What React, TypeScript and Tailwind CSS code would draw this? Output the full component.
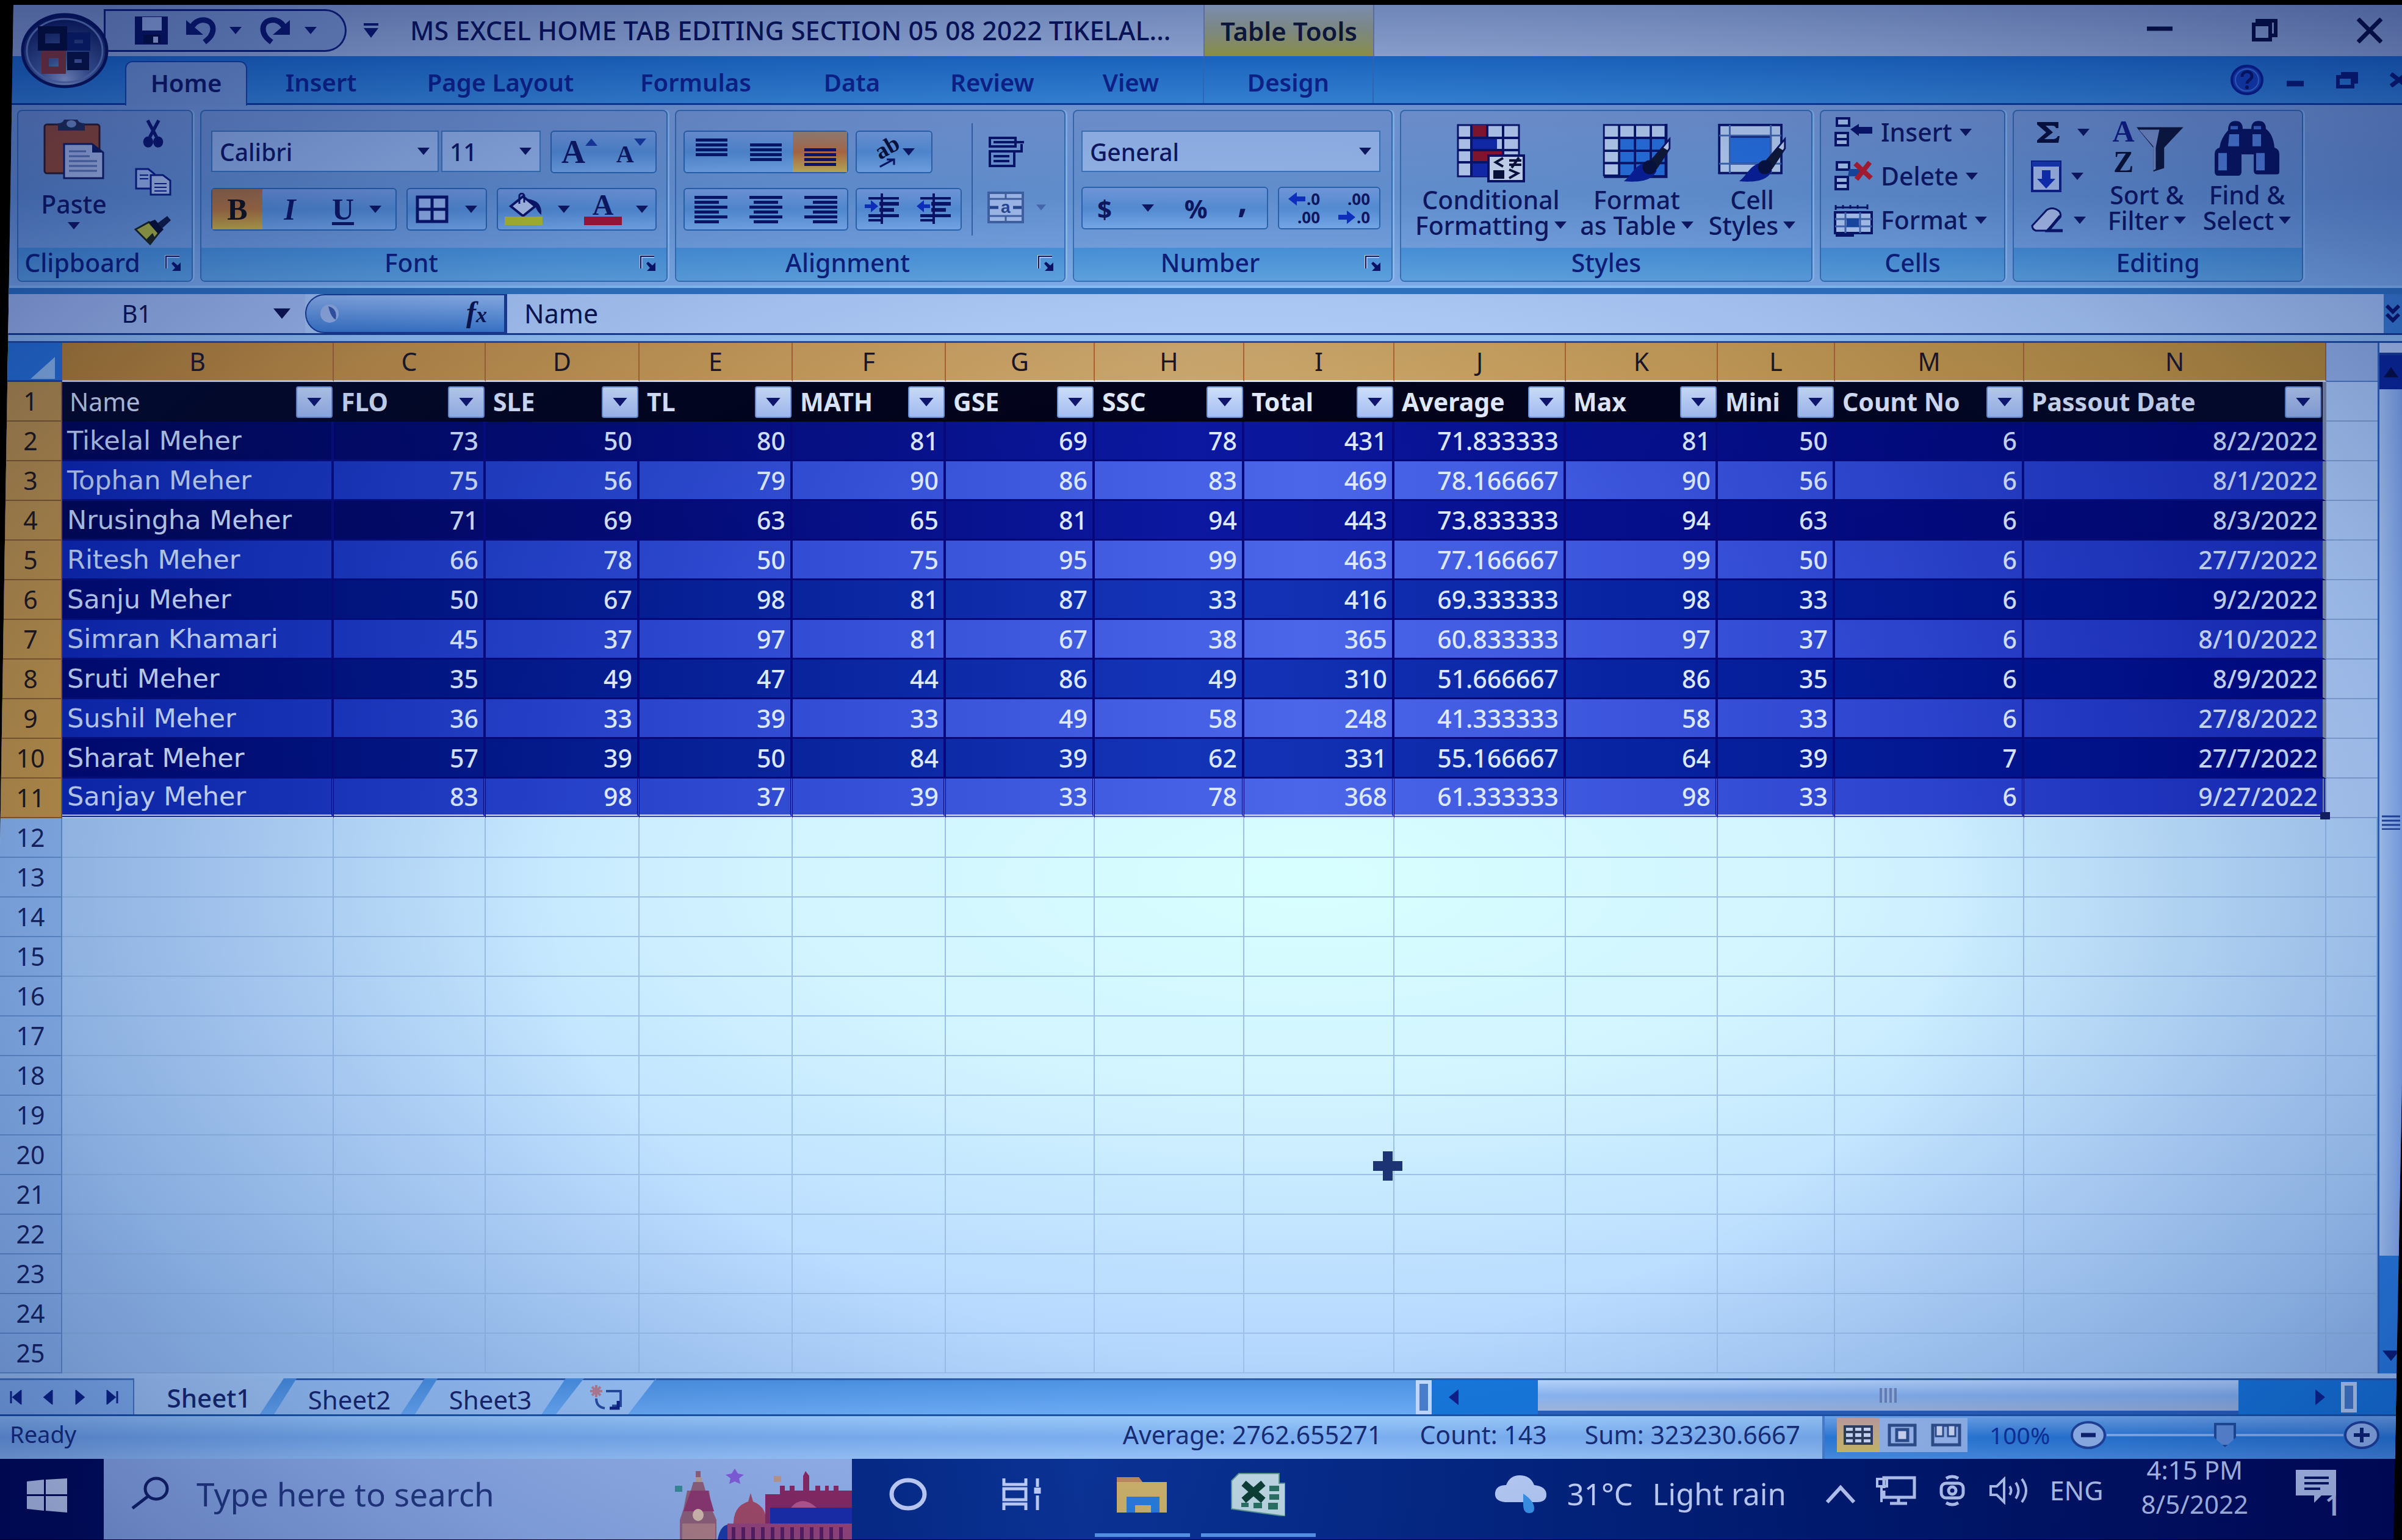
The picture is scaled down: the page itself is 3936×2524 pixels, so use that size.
import React, { ReactNode } from "react";

const NAVY = "#0a1064";

function Caret({ className = "w-[22px] h-3" }: { className?: string }) {
  return (
    <svg viewBox="0 0 20 12" className={className + " shrink-0"} fill="currentColor" aria-hidden="true">
      <path d="M0 0h20L10 12z" />
    </svg>
  );
}

function Launcher({ label }: { label: string }) {
  return (
    <button aria-label={label + " options"} className="absolute right-4 top-3 h-7 w-7">
      <svg viewBox="0 0 28 28" className="h-7 w-7" aria-hidden="true">
        <path d="M2 22V2h22" fill="none" stroke="#dfe8ff" strokeWidth="5" />
        <path d="M2 22V2h22" fill="none" stroke={NAVY} strokeWidth="2" />
        <path d="M26 12v14H12l5-5-6-7 3-3 7 6z" fill={NAVY} />
      </svg>
    </button>
  );
}

function Group({ label, className, launcher, children }: { label: string; className: string; launcher?: boolean; children: ReactNode }) {
  return (
    <section
      aria-label={label}
      className={
        "flex h-[282px] shrink-0 flex-col overflow-hidden rounded-lg border-2 border-[#3c78bc] bg-linear-to-b from-[#85a6df] via-[#709fdc] to-[#88b4f0] shadow-[3px_0_0_#9ccaf8] " +
        className
      }
    >
      <div className="min-h-0 flex-1">{children}</div>
      <div
        className={
          "relative flex h-[54px] items-center justify-center bg-linear-to-b from-[#4f9ce2] to-[#66ade8] text-[#101c78] " +
          (launcher ? "pr-[74px]" : "")
        }
      >
        <span className="pb-1">{label}</span>
        {launcher && <Launcher label={label} />}
      </div>
    </section>
  );
}

const BOX = "flex h-[70px] items-center rounded-md border-2 border-[#2f6cb4] bg-linear-to-b from-[#82aaea] via-[#5f9ae0] to-[#84b8f6]";

function IconBtn({ label, className = "", children }: { label: string; className?: string; children: ReactNode }) {
  return (
    <button aria-label={label} className={"flex h-full items-center justify-center " + className}>
      {children}
    </button>
  );
}

function Combo({ label, value, className }: { label: string; value: string; className: string }) {
  return (
    <div className={"relative h-[68px] border-2 border-[#4580c4] bg-[#aac8f8] " + className}>
      <select aria-label={label} defaultValue={value} className="h-full w-full appearance-none bg-transparent pl-3 text-[39px] leading-none">
        <option>{value}</option>
      </select>
      <Caret className="pointer-events-none absolute right-3 top-[26px] h-3 w-[22px]" />
    </div>
  );
}

function Lines({ rows, y = 0 }: { rows: [number, number][]; y?: number }) {
  return (
    <svg viewBox="0 0 56 48" className="h-12 w-14" aria-hidden="true">
      {rows.map(([x, w], i) => (
        <rect key={i} x={x} y={y + i * 8} width={w} height="5" fill={NAVY} />
      ))}
    </svg>
  );
}

function IndentIcon({ flip }: { flip?: boolean }) {
  return (
    <svg viewBox="0 0 60 52" className="h-[52px] w-[60px]" aria-hidden="true">
      <g fill={NAVY}>
        <rect x="6" y="6" width="50" height="4" />
        <rect x="24" y="14" width="32" height="6" />
        <rect x="24" y="24" width="24" height="6" />
        <rect x="6" y="34" width="50" height="5" />
        <rect x="6" y="42" width="22" height="4" />
        <rect x="26" y="0" width="4" height="50" />
      </g>
      {flip ? <path d="M22 21L10 11v7H0v6h10v7z" fill="#1030c8" /> : <path d="M0 21l12-10v7h10v6H12v7z" fill="#1030c8" />}
    </svg>
  );
}

function Brush() {
  return (
    <>
      <path d="M116 28L84 66l12 8 20-30z" fill="#dce8ff" stroke={NAVY} strokeWidth="3" />
      <path d="M104 42L80 68l14 12 20-32z" fill="#101428" />
      <path d="M80 68c-24 2-26 20-42 32 26 2 48 0 56-18z" fill="#0a1c98" />
      <circle cx="82" cy="76" r="12" fill="#080c30" />
    </>
  );
}

function CondIcon() {
  return (
    <svg viewBox="0 0 116 98" className="h-[98px] w-[116px]" aria-hidden="true">
      <rect x="4" y="4" width="100" height="84" fill="#cfe0ff" stroke={NAVY} strokeWidth="3" />
      <path d="M26 4h26v20H26zM26 46h50v18H26z" fill="#9a1020" />
      <path d="M26 26h42v18H26zM26 66h26v22H26z" fill="#1428b0" />
      <path d="M4 25h100M4 45h100M4 65h100M26 4v84M52 4v20M78 4v84" stroke={NAVY} strokeWidth="4" />
      <rect x="54" y="54" width="58" height="42" fill="#e4eeff" stroke={NAVY} strokeWidth="4" />
      <path d="M78 58L66 65l12 7M88 62h20M88 69h20M104 57L92 74M88 77l14 6-14 8" fill="none" stroke="#080c30" strokeWidth="4" />
      <rect x="62" y="78" width="18" height="14" fill="#080c30" />
    </svg>
  );
}

function FormatTableIcon() {
  return (
    <svg viewBox="0 0 120 102" className="h-[98px] w-[116px]" aria-hidden="true">
      <rect x="4" y="4" width="106" height="86" fill="#cfe4ff" stroke={NAVY} strokeWidth="3" />
      <path d="M30 26h80v64H30z" fill="#2c78e8" />
      <path d="M4 26h106M4 48h106M4 69h106M30 4v86M57 4v86M84 4v86" stroke={NAVY} strokeWidth="4" />
      <path d="M110 2v90H4" fill="none" stroke={NAVY} strokeWidth="5" />
      <Brush />
    </svg>
  );
}

function CellStylesIcon() {
  return (
    <svg viewBox="0 0 120 102" className="h-[98px] w-[116px]" aria-hidden="true">
      <rect x="4" y="4" width="106" height="82" fill="#cfe4ff" stroke={NAVY} strokeWidth="4" />
      <rect x="22" y="24" width="70" height="46" fill="#2c78e8" stroke={NAVY} strokeWidth="3" />
      <path d="M4 22h106M4 70h106M22 4v82M92 4v82" stroke="#4a70b8" strokeWidth="3" />
      <Brush />
    </svg>
  );
}

function CellsIcon({ kind }: { kind: "insert" | "delete" | "format" }) {
  if (kind === "format")
    return (
      <svg viewBox="0 0 66 54" className="h-[54px] w-[66px]" aria-hidden="true">
        <path d="M4 2v8M4 6h52M16 2v6M28 2v6M40 2v6M56 1v8" stroke={NAVY} strokeWidth="3" />
        <rect x="3" y="14" width="60" height="34" fill="#c4dcff" stroke={NAVY} strokeWidth="4" />
        <path d="M3 25h60M3 37h60M20 14v34M44 14v34" stroke="#4a70b8" strokeWidth="3" />
        <rect x="22" y="24" width="20" height="14" fill="#1c4ca8" />
        <path d="M4 52h28v-6" fill="none" stroke={NAVY} strokeWidth="4" />
      </svg>
    );
  return (
    <svg viewBox="0 0 66 50" className="h-[50px] w-[66px]" aria-hidden="true">
      <g fill="#c4dcff" stroke={NAVY} strokeWidth="4">
        <rect x="6" y="2" width="20" height="12" />
        <rect x="4" y="26" width="20" height="10" />
        <rect x="4" y="36" width="20" height="10" />
      </g>
      {kind === "insert" ? (
        <path d="M28 20l14-9v5h22v11H42v4z" fill={NAVY} />
      ) : (
        <>
          <path d="M26 13h18v12H24z" fill="#1c4ca8" />
          <path d="M36 4l26 24M60 2L38 30" stroke="#d01820" strokeWidth="8" />
        </>
      )}
    </svg>
  );
}

function SortIcon() {
  return (
    <span className="flex h-[104px] w-[120px]">
      <span className="flex w-11 flex-col font-[Liberation_Serif] text-[50px] leading-[50px] font-bold">
        <span className="h-[50px] text-[#141c84]">A</span>
        <span className="h-[50px] text-[#080c24]">Z</span>
      </span>
      <svg viewBox="38 0 78 96" className="h-24 w-[78px]" aria-hidden="true">
        <path d="M38 18h78L84 52v34l-18 6V52z" fill="#10142c" />
        <path d="M42 22h34L70 52v36l-4 2V50z" fill="#8fa6d8" />
      </svg>
    </span>
  );
}

function BinocularsIcon() {
  return (
    <svg viewBox="0 0 110 84" className="h-[92px] w-[110px]" preserveAspectRatio="none" aria-hidden="true">
      <path d="M24 16q0-14 12-14t12 12h14q0-12 12-12t12 12q12 8 14 28 8 2 8 10v26q0 4-4 4H72q-6 0-6-6V52H46v26q0 6-6 6H8q-6 0-6-6V52q0-8 8-10 2-14 14-26z" fill="#0a1158" />
      <path d="M26 22h16v18H24zM64 22h14v18H64zM8 50h14v26H8zM70 50h14v26H70z" fill="#5f8fe8" />
      <path d="M28 12h12M66 12h12" stroke="#4c78d8" strokeWidth="5" />
    </svg>
  );
}

function BigBtn({ icon, lines, className }: { icon: ReactNode; lines: [string, string]; className: string }) {
  return (
    <button className={"flex flex-col items-center " + className}>
      <span className="flex h-[104px] items-center justify-center">{icon}</span>
      <span className="mt-1 leading-[42px]">{lines[0]}</span>
      <span className="flex items-center gap-2 whitespace-nowrap leading-[42px]">
        {lines[1]}
        <Caret className="h-3 w-5" />
      </span>
    </button>
  );
}

function TitleBar() {
  return (
    <header className="relative flex h-[84px] items-center bg-linear-to-b from-[#9ab0da] to-[#b2c6ea]">
      <button aria-label="Office Button" className="absolute left-[34px] top-[13px] z-10 h-[124px] w-[144px]">
        <svg viewBox="0 0 144 124" className="h-full w-full" aria-hidden="true">
          <defs>
            <radialGradient id="orb" cx="50%" cy="90%" r="85%">
              <stop offset="0" stopColor="#c4d4f8" />
              <stop offset="0.35" stopColor="#5c74ac" />
              <stop offset="1" stopColor="#10164c" />
            </radialGradient>
          </defs>
          <ellipse cx="72" cy="62" rx="69" ry="59" fill="url(#orb)" stroke="#0a1050" strokeWidth="5" />
          <ellipse cx="72" cy="62" rx="62" ry="52" fill="none" stroke="#7c94cc" strokeWidth="3" />
          <g fill="none" strokeWidth="12">
            <rect x="34" y="28" width="36" height="28" stroke="#06081f" />
            <rect x="82" y="38" width="26" height="18" stroke="#101c60" />
            <rect x="40" y="68" width="28" height="26" stroke="#a83c24" />
            <rect x="82" y="70" width="24" height="18" stroke="#0a0e2c" />
          </g>
        </svg>
      </button>
      <div className="ml-[170px] flex h-[70px] w-[398px] items-center rounded-bl-[24px] rounded-r-full border-[3px] border-[#101c74] bg-[#94aede] pl-[46px] text-[#0c1468]">
        <button aria-label="Save">
          <svg viewBox="0 0 58 50" className="h-[50px] w-[58px]" aria-hidden="true">
            <path d="M2 2h54v46H2z" fill="#0a1058" />
            <path d="M14 3h32v22H14z" fill="#b8ccf8" />
            <path d="M16 32h28v14H16z" fill="#04082c" />
            <path d="M32 35h8v10h-8z" fill="#c8d8ff" />
          </svg>
        </button>
        <button aria-label="Undo" className="ml-7">
          <svg viewBox="0 0 50 46" className="h-[46px] w-[50px]" fill="none" aria-hidden="true">
            <path d="M10 16C20 0 44 4 44 20c0 10-6 16-14 22" stroke="#0c1468" strokeWidth="9" />
            <path d="M0 6v24h28z" fill="#0c1468" />
          </svg>
        </button>
        <button aria-label="Undo list" className="ml-5"><Caret /></button>
        <button aria-label="Redo" className="ml-7">
          <svg viewBox="0 0 50 46" className="h-[46px] w-[50px]" fill="none" aria-hidden="true">
            <path d="M40 16C30 0 6 4 6 20c0 10 6 16 14 22" stroke="#0c1468" strokeWidth="9" />
            <path d="M50 6v24H22z" fill="#0c1468" />
          </svg>
        </button>
        <button aria-label="Redo list" className="ml-6"><Caret className="h-3 w-5" /></button>
      </div>
      <button aria-label="Customize Quick Access Toolbar" className="ml-7 text-[#0c1468]">
        <svg viewBox="0 0 24 24" className="h-6 w-6" fill="currentColor" aria-hidden="true">
          <path d="M0 0h24v4H0zM0 8h24L12 24z" />
        </svg>
      </button>
      <h1 className="ml-[52px] w-[1300px] shrink-0 whitespace-nowrap text-[43px] font-medium text-[#0a0f50]">
        MS EXCEL HOME TAB EDITING SECTION 05 08 2022 TIKELAL...
      </h1>
      <div className="flex h-full w-[280px] items-center justify-center border-x-2 border-[#7c8cb0] bg-linear-to-b from-[#a8b8cc] via-[#a8ac88] to-[#b4b030] text-[42px] font-semibold text-[#10142c]">
        Table Tools
      </div>
      <div className="ml-auto flex items-center gap-[130px] pr-8 text-[#060a30]">
        <button aria-label="Minimize">
          <svg viewBox="0 0 42 42" className="h-[42px] w-[42px]" aria-hidden="true"><path d="M0 18h42" stroke="currentColor" strokeWidth="7" /></svg>
        </button>
        <button aria-label="Restore">
          <svg viewBox="0 0 42 40" className="h-10 w-[42px]" fill="none" stroke="currentColor" strokeWidth="6" aria-hidden="true">
            <rect x="3" y="10" width="27" height="25" />
            <path d="M9 10V4h30v24h-9" />
          </svg>
        </button>
        <button aria-label="Close">
          <svg viewBox="0 0 42 42" className="h-[42px] w-[42px]" aria-hidden="true"><path d="M2 2l38 38M40 2L2 40" stroke="currentColor" strokeWidth="7" /></svg>
        </button>
      </div>
    </header>
  );
}

function TabStrip() {
  const tabs: [string, string][] = [
    ["Insert", "w-[242px]"],
    ["Page Layout", "w-[346px]"],
    ["Formulas", "w-[294px]"],
    ["Data", "w-[218px]"],
    ["Review", "w-[242px]"],
    ["View", "w-[212px]"],
  ];
  return (
    <nav className="flex h-20 items-stretch border-b-[3px] border-[#0c3ca0] bg-linear-to-b from-[#2278d8] to-[#4096e8] pl-[205px] text-[40px] font-semibold text-[#10208c]">
      <button className="mt-2 -mb-1 w-[200px] rounded-t-xl border-x-2 border-t-2 border-[#1c48a8] bg-[#88acE4] pb-1 text-[#10145c]">Home</button>
      {tabs.map(([t, w]) => (
        <button key={t} className={"shrink-0 pt-2 " + w}>{t}</button>
      ))}
      <button className="ml-3 w-[280px] border-x-2 border-[#3c78c8] pt-2">Design</button>
      <div className="ml-auto flex items-center gap-9 text-[#0a1870]">
        <button aria-label="Help">
          <svg viewBox="0 0 56 52" className="h-[52px] w-14" aria-hidden="true">
            <ellipse cx="28" cy="26" rx="25" ry="23" fill="#1a44c4" stroke="#0c1c90" strokeWidth="4" />
            <ellipse cx="28" cy="26" rx="19" ry="18" fill="none" stroke="#4c80e8" strokeWidth="2" />
            <path d="M20 21c0-11 16-11 16-1 0 6-8 6-8 12" fill="none" stroke="#0a1260" strokeWidth="5" />
            <circle cx="28" cy="38" r="3" fill="#0a1260" />
          </svg>
        </button>
        <button aria-label="Minimize workbook"><svg viewBox="0 0 30 24" className="h-6 w-[30px]" aria-hidden="true"><path d="M1 18h28" stroke="currentColor" strokeWidth="9" /></svg></button>
        <button aria-label="Restore workbook" className="ml-4">
          <svg viewBox="0 0 36 30" className="h-[30px] w-9" fill="none" stroke="currentColor" strokeWidth="6" aria-hidden="true">
            <path d="M3 10h24v16H3zM8 5h25v16" />
          </svg>
        </button>
        <button aria-label="Close workbook" className="ml-4 w-5 overflow-hidden">
          <svg viewBox="0 0 30 24" className="h-6 w-[30px]" aria-hidden="true"><path d="M2 2l26 20M28 2L2 22" stroke="currentColor" strokeWidth="7" /></svg>
        </button>
      </div>
    </nav>
  );
}

function Ribbon() {
  const full: [number, number][] = [[2, 52], [2, 52], [2, 52], [2, 52]];
  return (
    <div className="flex gap-3 border-b-4 border-[#94ccff] bg-linear-to-b from-[#8aaee6] via-[#76a2e0] to-[#8ab8f2] pt-2 pb-[6px] pl-7 text-[41px] font-medium text-[#10145c]">
      <Group label="Clipboard" className="w-[288px]" launcher>
        <div className="flex h-full">
          <button className="flex w-[190px] flex-col items-center pt-3 pr-2">
            <svg viewBox="0 0 104 102" className="h-[102px] w-[104px]" aria-hidden="true">
              <rect x="4" y="10" width="90" height="80" rx="4" fill="#b05020" stroke="#3a1810" strokeWidth="3" />
              <path d="M26 8q8 0 10-6h22q2 6 12 6v12H26z" fill="#2a3048" />
              <ellipse cx="48" cy="9" rx="8" ry="6" fill="#8ca4d4" />
              <path d="M36 42h46l18 14v42H36z" fill="#c8d8fc" stroke="#141c5c" strokeWidth="3" />
              <path d="M82 42v14h18z" fill="#141c5c" />
              <path d="M44 54h28M44 62h34M44 70h46M44 78h46M44 86h46" stroke="#6c84b8" strokeWidth="3" />
            </svg>
            <span className="mt-4 leading-[44px]">Paste</span>
            <Caret className="mt-2 h-3 w-5" />
          </button>
          <div className="flex flex-col items-center gap-5 pt-2">
            <IconBtn label="Cut" className="h-[54px]">
              <svg viewBox="0 0 44 52" className="h-12 w-10" fill="none" stroke="#0c1468" strokeWidth="6" aria-hidden="true">
                <path d="M12 2l16 30M32 2L16 32" />
                <ellipse cx="13" cy="41" rx="6" ry="7" fill="#0c1468" />
                <ellipse cx="31" cy="41" rx="6" ry="7" fill="#0c1468" />
              </svg>
            </IconBtn>
            <IconBtn label="Copy" className="h-[50px]">
              <svg viewBox="0 0 60 46" className="h-[46px] w-[60px]" stroke="#0c1c84" strokeWidth="3" aria-hidden="true">
                <path d="M2 2h20l10 8v24H2z" fill="#b8d0ff" />
                <path d="M26 12h20l12 9v23H26z" fill="#c8dcff" />
                <path d="M32 26h20M32 32h20M32 38h20M8 12h14M8 18h14" strokeWidth="2" />
              </svg>
            </IconBtn>
            <IconBtn label="Format Painter" className="h-[54px]">
              <svg viewBox="0 0 62 50" className="h-[50px] w-[62px]" aria-hidden="true">
                <path d="M2 24L24 12l16 18-14 18z" fill="#c8cc30" stroke="#20240c" strokeWidth="3" />
                <path d="M24 12l10-4 14 16-8 8z" fill="#080c24" />
                <path d="M38 14L54 2l6 7-14 13z" fill="#141a38" />
                <path d="M20 40l10-10 4 8-8 10z" fill="#20240c" />
              </svg>
            </IconBtn>
          </div>
        </div>
      </Group>

      <Group label="Font" className="w-[766px]" launcher>
        <div className="flex flex-col gap-6 px-4 pt-8">
          <div className="flex gap-1">
            <Combo label="Font name" value="Calibri" className="w-[374px]" />
            <Combo label="Font size" value="11" className="w-[164px]" />
            <div className={BOX + " ml-3 w-[174px] justify-around"}>
              <IconBtn label="Grow Font">
                <span className="font-[Liberation_Serif] text-[54px] leading-none font-bold">A</span>
                <svg viewBox="0 0 20 12" className="mb-8 h-3 w-5" aria-hidden="true"><path d="M0 12h20L10 0z" fill="#1c3ca4" /></svg>
              </IconBtn>
              <IconBtn label="Shrink Font">
                <span className="pt-2 font-[Liberation_Serif] text-[40px] leading-none font-bold">A</span>
                <svg viewBox="0 0 20 12" className="mb-8 h-3 w-5" aria-hidden="true"><path d="M0 0h20L10 12z" fill="#1c3ca4" /></svg>
              </IconBtn>
            </div>
          </div>
          <div className="flex gap-4">
            <div className={BOX + " w-[304px] font-[Liberation_Serif] text-[50px] leading-none"}>
              <IconBtn label="Bold" className="w-[82px] bg-linear-to-b from-[#b87838] via-[#d08030] to-[#e8c838] font-bold text-[#141008]">B</IconBtn>
              <IconBtn label="Italic" className="w-[90px] font-bold italic">I</IconBtn>
              <IconBtn label="Underline" className="w-[84px] font-bold underline underline-offset-4">U</IconBtn>
              <IconBtn label="Underline style"><Caret /></IconBtn>
            </div>
            <div className={BOX + " w-[132px] justify-around"}>
              <IconBtn label="Borders">
                <svg viewBox="0 0 54 46" className="h-[46px] w-[54px]" fill="#a8c4f8" stroke={NAVY} strokeWidth="5" aria-hidden="true">
                  <path d="M3 3h48v40H3zM27 3v40M3 23h48" />
                </svg>
              </IconBtn>
              <IconBtn label="Border style"><Caret /></IconBtn>
            </div>
            <div className={BOX + " w-[262px] justify-around"}>
              <IconBtn label="Fill Color">
                <svg viewBox="0 0 64 54" className="h-[54px] w-16" aria-hidden="true">
                  <path d="M10 22L30 6l20 16-20 16z" fill="#c8d8fc" stroke={NAVY} strokeWidth="4" />
                  <path d="M36 10q26 2 24 26-6-4-10-14z" fill={NAVY} />
                  <path d="M24 18V4q4-6 8 0v12" fill="none" stroke={NAVY} strokeWidth="3" />
                  <path d="M0 39h62v14H0z" fill="#c8d020" />
                </svg>
              </IconBtn>
              <IconBtn label="Fill color list"><Caret /></IconBtn>
              <IconBtn label="Font Color">
                <span className="flex flex-col items-center">
                  <span className="h-[38px] font-[Liberation_Serif] text-[48px] leading-[38px] font-bold">A</span>
                  <span className="h-[14px] w-[62px] bg-[#b81028]" />
                </span>
              </IconBtn>
              <IconBtn label="Font color list"><Caret /></IconBtn>
            </div>
          </div>
        </div>
      </Group>

      <Group label="Alignment" className="w-[640px]" launcher>
        <div className="flex h-full">
          <div className="flex w-[484px] flex-col gap-6 py-8 pl-3">
            <div className="flex gap-3">
              <div className={BOX + " w-[270px]"}>
                <IconBtn label="Top Align" className="flex-1"><Lines rows={full} y={2} /></IconBtn>
                <IconBtn label="Middle Align" className="flex-1"><Lines rows={full} y={10} /></IconBtn>
                <IconBtn label="Bottom Align" className="flex-1 bg-linear-to-b from-[#b09070] via-[#cc7438] to-[#dcc050]"><Lines rows={full} y={18} /></IconBtn>
              </div>
              <div className={BOX + " w-[126px] justify-center"}>
                <IconBtn label="Orientation">
                  <span className="flex flex-col items-center">
                    <span className="h-9 -rotate-30 font-[Liberation_Serif] text-[38px] leading-9 font-bold text-[#080c30]">ab</span>
                    <svg viewBox="0 0 44 20" className="h-4 w-11" aria-hidden="true">
                      <path d="M8 18L34 4M22 3h15v11" fill="none" stroke={NAVY} strokeWidth="4" />
                    </svg>
                  </span>
                  <Caret className="ml-1 h-3 w-5" />
                </IconBtn>
              </div>
            </div>
            <div className="flex gap-3">
              <div className={BOX + " w-[270px]"}>
                <IconBtn label="Align Left" className="flex-1"><Lines y={2} rows={[[0, 54], [0, 40], [0, 54], [0, 40], [0, 54], [0, 40]]} /></IconBtn>
                <IconBtn label="Center" className="flex-1"><Lines y={2} rows={[[1, 54], [8, 40], [1, 54], [8, 40], [1, 54], [8, 40]]} /></IconBtn>
                <IconBtn label="Align Right" className="flex-1"><Lines y={2} rows={[[2, 54], [16, 40], [2, 54], [16, 40], [2, 54], [16, 40]]} /></IconBtn>
              </div>
              <div className={BOX + " w-[174px] justify-around"}>
                <IconBtn label="Decrease Indent"><IndentIcon flip /></IconBtn>
                <IconBtn label="Increase Indent"><IndentIcon /></IconBtn>
              </div>
            </div>
          </div>
          <div className="my-5 flex flex-col gap-10 border-l-2 border-[#3c68ac] pt-5 pl-6">
            <button aria-label="Wrap Text">
              <svg viewBox="0 0 64 52" className="h-[52px] w-16" fill="none" stroke={NAVY} strokeWidth="4" aria-hidden="true">
                <rect x="4" y="4" width="42" height="14" />
                <rect x="4" y="26" width="40" height="24" />
                <path d="M10 11h50M10 34h26M10 42h26M46 26h10V14" />
              </svg>
            </button>
            <button aria-label="Merge and Center" className="flex items-center gap-5 text-[#5070b4]">
              <svg viewBox="0 0 60 52" className="h-[52px] w-[60px]" aria-hidden="true">
                <rect x="2" y="2" width="56" height="48" fill="#b4ccf8" stroke="#4868a8" strokeWidth="4" />
                <path d="M2 12h56M2 40h56M30 2v10M30 40v10" stroke="#4868a8" strokeWidth="3" />
                <text x="22" y="35" fontFamily="Liberation Sans, sans-serif" fontWeight="700" fontSize="28" fill="#2c4c94">a</text>
                <path d="M4 26h14M56 26H42" stroke="#2c4c94" strokeWidth="5" />
              </svg>
              <Caret className="h-3 w-4" />
            </button>
          </div>
        </div>
      </Group>

      <Group label="Number" className="w-[524px]" launcher>
        <div className="flex flex-col gap-6 px-3 pt-8">
          <Combo label="Number format" value="General" className="w-[490px]" />
          <div className="flex gap-4">
            <div className={BOX + " w-[306px] justify-between pl-6 pr-8 text-[42px] font-bold"}>
              <IconBtn label="Accounting Format">$</IconBtn>
              <IconBtn label="Currency list"><Caret className="h-3 w-5" /></IconBtn>
              <IconBtn label="Percent Style">%</IconBtn>
              <IconBtn label="Comma Style"><span className="pb-7 text-[56px] leading-none">,</span></IconBtn>
            </div>
            <div className={BOX + " w-[168px] justify-around text-[26px] leading-[30px] font-bold"}>
              <IconBtn label="Increase Decimal">
                <span className="flex flex-col items-end">
                  <span className="flex items-center">
                    <svg viewBox="0 0 30 22" className="h-[22px] w-[30px]" aria-hidden="true"><path d="M0 11L14 0v7h14v8H14v7z" fill="#1030c8" /></svg>
                    .0
                  </span>
                  <span>.00</span>
                </span>
              </IconBtn>
              <IconBtn label="Decrease Decimal">
                <span className="flex flex-col items-end">
                  <span>.00</span>
                  <span className="flex items-center">
                    <svg viewBox="0 0 30 22" className="h-[22px] w-[30px]" aria-hidden="true"><path d="M28 11L14 0v7H0v8h14v7z" fill="#1030c8" /></svg>
                    .0
                  </span>
                </span>
              </IconBtn>
            </div>
          </div>
        </div>
      </Group>

      <Group label="Styles" className="w-[676px]">
        <div className="flex justify-between px-4 pt-4">
          <BigBtn icon={<CondIcon />} lines={["Conditional", "Formatting"]} className="w-[262px]" />
          <BigBtn icon={<FormatTableIcon />} lines={["Format", "as Table"]} className="w-[204px]" />
          <BigBtn icon={<CellStylesIcon />} lines={["Cell", "Styles"]} className="w-[162px]" />
        </div>
      </Group>

      <Group label="Cells" className="w-[304px]">
        <div className="flex flex-col gap-[18px] pt-2 pl-5">
          {(["insert", "delete", "format"] as const).map((k) => (
            <button key={k} className="flex h-[54px] items-center gap-3">
              <CellsIcon kind={k} />
              <span className="capitalize">{k}</span>
              <Caret className="h-3 w-5" />
            </button>
          ))}
        </div>
      </Group>

      <Group label="Editing" className="w-[476px]">
        <div className="flex pt-2">
          <div className="flex w-[136px] flex-col gap-[18px] pl-7">
            <button aria-label="AutoSum" className="flex h-[54px] items-center gap-7">
              <svg viewBox="0 0 40 36" className="ml-2 h-9 w-10" aria-hidden="true"><path d="M2 1h35v10h-4q-1-4-6-4H16l12 11-14 11h14q6 0 8-5h3l-2 11H2v-4l15-13L2 5z" fill="#080c30" /></svg>
              <Caret className="h-3 w-5" />
            </button>
            <button aria-label="Fill" className="flex h-[54px] items-center gap-4">
              <svg viewBox="0 0 50 52" className="h-[52px] w-[50px]" aria-hidden="true">
                <rect x="2" y="2" width="46" height="48" fill="#c4d8ff" stroke="#10208c" strokeWidth="4" />
                <path d="M2 2h46v8H2z" fill="#1c3cc0" />
                <path d="M18 16h14v14h8L25 46 10 30h8z" fill="#1430c0" />
              </svg>
              <Caret className="h-3 w-5" />
            </button>
            <button aria-label="Clear" className="flex h-[54px] items-center gap-4">
              <svg viewBox="0 0 54 42" className="h-[42px] w-[54px]" aria-hidden="true">
                <path d="M2 30L26 4q10-6 20 2 4 4 2 10L26 38H8q-6-2-6-8z" fill="#c4d4fa" stroke={NAVY} strokeWidth="3" />
                <path d="M48 14L28 38h24" fill="none" stroke={NAVY} strokeWidth="5" />
              </svg>
              <Caret className="h-3 w-5" />
            </button>
          </div>
          <BigBtn icon={<SortIcon />} lines={["Sort &", "Filter"]} className="w-[164px]" />
          <BigBtn icon={<BinocularsIcon />} lines={["Find &", "Select"]} className="w-[164px]" />
        </div>
      </Group>
    </div>
  );
}

function FormulaBar() {
  return (
    <div className="flex h-[77px] items-stretch border-t-[10px] border-b-[3px] border-t-[#3478c4] border-b-[#183c8c] bg-[#b8d4fe] text-[43px] text-[#0c1048]">
      <div className="flex w-[500px] items-center bg-[#b0c8f6]">
        <input aria-label="Name Box" defaultValue="B1" className="w-[448px] bg-transparent text-center text-[40px]" />
        <button aria-label="Name list"><Caret className="h-[18px] w-7" /></button>
      </div>
      <div className="flex w-[328px] items-center justify-between rounded-l-full border-2 border-[#1c3c94] bg-linear-to-b from-[#a0c4f8] to-[#4080d4] pl-5">
        <svg viewBox="0 0 36 32" className="h-8 w-9" aria-hidden="true">
          <circle cx="18" cy="16" r="15" fill="#a8c0f0" />
          <path d="M16 4q16 4 12 22-8-4-12-22z" fill="#3c5cac" />
        </svg>
        <button aria-label="Insert Function" className="pr-7 pb-1 font-[Liberation_Serif] text-[48px] leading-none font-bold italic">
          f<span className="text-[36px]">x</span>
        </button>
      </div>
      <input aria-label="Formula" defaultValue="Name" className="min-w-0 flex-1 border-l-[3px] border-[#1c3c94] bg-transparent pl-7" />
      <button aria-label="Expand formula bar" className="flex w-[30px] items-center justify-center bg-[#4084d8]">
        <svg viewBox="0 0 24 30" className="h-[30px] w-6" fill="none" stroke={NAVY} strokeWidth="6" aria-hidden="true"><path d="M2 2l10 10L22 2M2 16l10 10 10-10" /></svg>
      </button>
    </div>
  );
}

const COLS: [string, string, string][] = [
  ["B", "Name", "w-[445px]"],
  ["C", "FLO", "w-[249px]"],
  ["D", "SLE", "w-[252px]"],
  ["E", "TL", "w-[251px]"],
  ["F", "MATH", "w-[251px]"],
  ["G", "GSE", "w-[244px]"],
  ["H", "SSC", "w-[245px]"],
  ["I", "Total", "w-[246px]"],
  ["J", "Average", "w-[281px]"],
  ["K", "Max", "w-[249px]"],
  ["L", "Mini", "w-[192px]"],
  ["M", "Count No", "w-[310px]"],
  ["N", "Passout Date", "w-[495px]"],
];

const DATA: string[][] = [
  ["Tikelal Meher", "73", "50", "80", "81", "69", "78", "431", "71.833333", "81", "50", "6", "8/2/2022"],
  ["Tophan Meher", "75", "56", "79", "90", "86", "83", "469", "78.166667", "90", "56", "6", "8/1/2022"],
  ["Nrusingha Meher", "71", "69", "63", "65", "81", "94", "443", "73.833333", "94", "63", "6", "8/3/2022"],
  ["Ritesh Meher", "66", "78", "50", "75", "95", "99", "463", "77.166667", "99", "50", "6", "27/7/2022"],
  ["Sanju Meher", "50", "67", "98", "81", "87", "33", "416", "69.333333", "98", "33", "6", "9/2/2022"],
  ["Simran Khamari", "45", "37", "97", "81", "67", "38", "365", "60.833333", "97", "37", "6", "8/10/2022"],
  ["Sruti Meher", "35", "49", "47", "44", "86", "49", "310", "51.666667", "86", "35", "6", "8/9/2022"],
  ["Sushil Meher", "36", "33", "39", "33", "49", "58", "248", "41.333333", "58", "33", "6", "27/8/2022"],
  ["Sharat Meher", "57", "39", "50", "84", "39", "62", "331", "55.166667", "64", "39", "7", "27/7/2022"],
  ["Sanjay Meher", "83", "98", "37", "39", "33", "78", "368", "61.333333", "98", "33", "6", "9/27/2022"],
];

const ROWHEAD = "border-b-2 border-r-2 p-0 text-center font-normal ";
const ROWHEAD_ON = ROWHEAD + "border-[#94601c] bg-[#d09a3c] text-[#241408]";

function Grid() {
  return (
    <div className="relative flex border-t-[3px] border-[#2450a0]">
      <table className="w-full min-w-0 flex-1 table-fixed border-separate border-spacing-0 bg-[radial-gradient(ellipse_64%_60%_at_55%_52%,#d8ffff_0%,#d2f4ff_35%,#b8daff_72%,#a4caf8_100%)] text-[41px] leading-none">
        <colgroup>
          <col className="w-[102px]" />
          {COLS.map((c) => (
            <col key={c[0]} className={c[2]} />
          ))}
          <col />
        </colgroup>
        <thead>
          <tr className="h-[64px] bg-linear-to-r from-[#cc8818] via-[#d0aa6c] to-[#c89024]">
            <th className="border-b-[3px] border-[#1c48a0] bg-[#2c78dc] p-0" aria-label="Select all">
              <svg viewBox="0 0 40 36" className="mt-5 ml-auto mr-3 h-9 w-10" aria-hidden="true"><path d="M40 0v36H0z" fill="#9cc8f4" /></svg>
            </th>
            {COLS.map((c) => (
              <th key={c[0]} scope="col" className="border-r-2 border-b-[3px] border-r-[#b4642c] border-b-[#e8ecff] p-0 font-normal text-[#1c1420]">{c[0]}</th>
            ))}
            <th className="border-b-2 border-[#5c84c4] bg-[#a4c0f0] p-0" />
          </tr>
        </thead>
        <tbody>
          <tr className="h-[65px] bg-[#020218]">
            <th scope="row" className={ROWHEAD_ON}>1</th>
            {COLS.map((c, i) => (
              <td key={c[0]} className={"overflow-hidden p-0 text-[#e6eeff] " + (i === 12 ? "border-r-[6px] border-[#8c94a8]" : "")}>
                <div className="flex items-center justify-between pl-3">
                  <span className={"w-0 flex-1 whitespace-nowrap " + (i === 0 ? "font-normal" : "font-bold")}>{c[1]}</span>
                  <button aria-label={"Filter " + c[1]} className="z-10 mr-[2px] flex h-[52px] w-[60px] shrink-0 items-center justify-center rounded-sm border-2 border-[#6c94d8] bg-linear-to-b from-[#d4e4ff] to-[#a8c0f4] text-[#10146c]">
                    <Caret className="h-[14px] w-6" />
                  </button>
                </div>
              </td>
            ))}
            <td className="border-b-2 border-[#90acd8] bg-[#bcd8ff] p-0" />
          </tr>
          {DATA.map((r, ri) => (
            <tr
              key={ri}
              className={
                "h-[65px] " +
                (ri % 2
                  ? "bg-linear-to-r from-[#0c20b0] via-[#4c66ea] via-55% to-[#1824b8]"
                  : ri < 4
                    ? "bg-linear-to-r from-[#000048] via-[#0c18a0] via-50% to-[#000068]"
                    : "bg-linear-to-r from-[#000068] via-[#1434b8] via-50% to-[#00007c]")
              }
            >
              <th scope="row" className={ROWHEAD_ON}>{ri + 2}</th>
              {r.map((v, i) => (
                <td
                  key={i}
                  className={
                    "p-0 text-[#dce8ff] " +
                    (i === 0 ? "pl-2 text-left font-['DejaVu_Sans'] text-[43px] " : "pr-2 text-right font-medium ") +
                    (i === 12 ? "relative border-r-[6px] border-r-[#8c94a8] " : "border-r-4 border-r-[#08087c] ") +
                    (ri === 9 ? "border-b-[6px] border-double border-b-[#dce8ff]" : "border-b-[3px] border-b-[#060878]")
                  }
                >
                  {v}
                  {ri === 9 && i === 12 && <span className="absolute -right-3 -bottom-2 h-3 w-4 bg-[#141c5c]" />}
                </td>
              ))}
              <td className="border-b-2 border-[#90acd8] bg-[#bcd8ff] p-0" />
            </tr>
          ))}
          {Array.from({ length: 14 }, (_, k) => (
            <tr key={k} className="h-[65px]">
              <th scope="row" className={ROWHEAD + "border-[#6c98d0] bg-[#98c0f4] text-[#182058]"}>{k + 12}</th>
              {Array.from({ length: 14 }, (_, j) => (
                <td key={j} className="border-r-2 border-b-2 border-[#9cc0ea] p-0" />
              ))}
            </tr>
          ))}
        </tbody>
      </table>
      <div className="flex w-10 flex-col items-center border-l-[3px] border-[#3468bc] bg-[#2c80e4]">
        <div className="h-5 w-full border-b-4 border-[#1c3c94] bg-[#c4d8ff]" />
        <button aria-label="Scroll up" className="flex h-14 w-full items-center justify-center bg-[#0c2498] text-[#040838]">
          <svg viewBox="0 0 20 14" className="h-[18px] w-6" fill="currentColor" aria-hidden="true"><path d="M0 14h20L10 0z" /></svg>
        </button>
        <div className="flex h-[1420px] w-full items-center justify-center bg-linear-to-r from-[#b8d4fc] to-[#8cb0f0]">
          <svg viewBox="0 0 30 24" className="h-6 w-[30px]" stroke="#24449c" strokeWidth="3" aria-hidden="true"><path d="M0 2h30M0 9h30M0 16h30M0 23h30" /></svg>
        </div>
        <button aria-label="Scroll down" className="mt-auto mb-5 text-[#0a1870]"><Caret className="h-[18px] w-7" /></button>
      </div>
      <svg viewBox="0 0 50 50" className="pointer-events-none absolute left-[2249px] top-[1324px] h-[50px] w-[50px]" aria-hidden="true">
        <path d="M17 1h16v16h16v16H33v16H17V33H1V17h16z" fill="#1c3474" />
      </svg>
    </div>
  );
}

function SheetTabs() {
  const nav = ["M4 2v20M20 2v20L8 12z", "M18 2v20L6 12z", "M6 2v20l12-10z", "M4 2v20l12-10zM20 2v20"];
  const names = ["First sheet", "Previous sheet", "Next sheet", "Last sheet"];
  return (
    <div className="flex h-[62px] items-stretch border-b-[3px] border-[#1c54a8] bg-linear-to-b from-[#4c94e4] to-[#70b0fa] text-[42px] text-[#182468]">
      <div className="flex w-[220px] items-center justify-around border-t-[3px] border-r-2 border-[#4c7cc4] bg-[#90bcf6] pr-2">
        {nav.map((d, i) => (
          <button key={i} aria-label={names[i]}>
            <svg viewBox="0 0 24 24" className="h-6 w-6" fill="#0c2080" stroke="#0c2080" strokeWidth="3" aria-hidden="true"><path d={d} /></svg>
          </button>
        ))}
      </div>
      <button className="relative z-20 -mr-4 w-[245px] bg-[#aed2fc] font-medium [clip-path:polygon(0_0,100%_0,84%_100%,0_100%)]">Sheet1</button>
      <button className="relative z-10 -mr-4 w-[247px] border-t-[3px] border-[#2c5cac] bg-[#a0c8fa] [clip-path:polygon(15%_0,100%_0,84%_100%,0_100%)]">Sheet2</button>
      <button className="relative -mr-4 w-[247px] border-t-[3px] border-[#2c5cac] bg-[#a0c8fa] [clip-path:polygon(15%_0,100%_0,84%_100%,0_100%)]">Sheet3</button>
      <button aria-label="Insert Worksheet" className="flex w-[164px] items-center justify-center border-t-[3px] border-[#2c5cac] bg-[#a0c8fa] [clip-path:polygon(28%_0,100%_0,72%_100%,0_100%)]">
        <svg viewBox="0 0 60 44" className="h-11 w-[60px]" fill="none" aria-hidden="true">
          <path d="M30 12h24v24H40M14 24q0 14 14 16" stroke="#2c4ca0" strokeWidth="4" />
          <path d="M36 40h14V28" stroke="#102080" strokeWidth="5" />
          <path d="M14 2v20M4 12h20M7 5l14 14M21 5L7 19" stroke="#c08090" strokeWidth="4" />
        </svg>
      </button>
      <div className="flex-1 border-t-[3px] border-[#2c5cac]" />
      <div className="flex w-[1616px] items-center border-t-[3px] border-[#2c5cac] bg-[#1878dc]">
        <div className="h-full w-[26px] border-[6px] border-[#c4dcff] bg-[#4c80cc]" />
        <button aria-label="Scroll left" className="ml-7">
          <svg viewBox="0 0 16 26" className="h-[26px] w-4" fill="#0c2088" aria-hidden="true"><path d="M16 0v26L0 13z" /></svg>
        </button>
        <div className="ml-[130px] flex h-full w-[1148px] items-center justify-center border-b-[6px] border-[#2c60bc] bg-linear-to-b from-[#bcd8ff] via-[#8cb8f4] to-[#a8bce0]">
          <div className="h-6 w-7 bg-[repeating-linear-gradient(90deg,#6c88bc_0_4px,#a4bce8_4px_8px)]" />
        </div>
        <button aria-label="Scroll right" className="ml-auto">
          <svg viewBox="0 0 16 26" className="h-[26px] w-5" fill="#0c2088" aria-hidden="true"><path d="M0 0v26l16-13z" /></svg>
        </button>
        <div className="ml-6 mr-[74px] h-[50px] w-[26px] border-[6px] border-[#c4dcff] bg-[#4c80cc]" />
      </div>
    </div>
  );
}

function StatusBar() {
  return (
    <footer className="flex h-[70px] items-center bg-linear-to-b from-[#a0d0ff] via-[#80b4f6] to-[#a0ccff] pl-4 text-[41px] text-[#182c74]">
      <span className="pb-3 text-[38px]">Ready</span>
      <div className="ml-auto flex gap-[62px] pr-9 pb-2 whitespace-nowrap">
        <span>Average: 2762.655271</span>
        <span>Count: 143</span>
        <span>Sum: 323230.6667</span>
      </div>
      <div className="flex h-full w-[950px] items-center border-l-4 border-[#4c84d4] bg-linear-to-b from-[#78b0f4] via-[#2c80e0] to-[#5098ec] pb-2 pl-5">
        <div className="flex h-14 items-center gap-[2px] bg-[#a0c0f4]">
          <button aria-label="Normal" className="flex h-full w-[70px] items-center justify-center bg-linear-to-b from-[#d0a8a0] to-[#e0c860]">
            <svg viewBox="0 0 48 32" className="h-8 w-12" fill="#e0e8ff" stroke="#34405c" strokeWidth="4" aria-hidden="true"><path d="M2 2h44v28H2zM17 2v28M31 2v28M2 11h44M2 21h44" /></svg>
          </button>
          <button aria-label="Page Layout" className="flex w-[70px] justify-center">
            <svg viewBox="0 0 48 38" className="h-[38px] w-12" fill="#a8c4f8" stroke="#34508c" strokeWidth="5" aria-hidden="true"><path d="M3 3h42v32H3z" /><path d="M15 10h18v18H15z" fill="#e0e8ff" /></svg>
          </button>
          <button aria-label="Page Break Preview" className="flex w-[70px] justify-center">
            <svg viewBox="0 0 50 38" className="h-[38px] w-[50px]" fill="#a8c4f8" stroke="#34508c" strokeWidth="5" aria-hidden="true"><path d="M3 3h44v32H3z" /><path d="M8 3h12v18H8zM28 3h12v18H28z" fill="#e0e8ff" strokeWidth="3" /></svg>
          </button>
        </div>
        <span className="ml-9 w-[112px] text-[39px] text-[#10309c]">100%</span>
        <button aria-label="Zoom out" className="ml-5">
          <svg viewBox="0 0 60 48" className="h-12 w-[60px]" aria-hidden="true"><ellipse cx="30" cy="24" rx="27" ry="21" fill="#a4c4f8" stroke="#24449c" strokeWidth="4" /><path d="M18 24h24" stroke="#10206c" strokeWidth="7" /></svg>
        </button>
        <input
          aria-label="Zoom"
          type="range"
          defaultValue={50}
          className="h-10 min-w-0 flex-1 appearance-none bg-[linear-gradient(#94c0ff,#94c0ff)] bg-[length:100%_4px] bg-center bg-no-repeat [&::-webkit-slider-thumb]:h-10 [&::-webkit-slider-thumb]:w-9 [&::-webkit-slider-thumb]:appearance-none [&::-webkit-slider-thumb]:bg-[#6c98e4] [&::-webkit-slider-thumb]:border-4 [&::-webkit-slider-thumb]:border-[#24509c] [&::-webkit-slider-thumb]:[clip-path:polygon(0_0,100%_0,100%_60%,50%_100%,0_60%)]"
        />
        <button aria-label="Zoom in" className="mr-9">
          <svg viewBox="0 0 60 48" className="h-12 w-[60px]" aria-hidden="true"><ellipse cx="30" cy="24" rx="27" ry="21" fill="#a4c4f8" stroke="#24449c" strokeWidth="4" /><path d="M17 24h26M30 12v24" stroke="#10206c" strokeWidth="6" /></svg>
        </button>
      </div>
    </footer>
  );
}

function CityArt() {
  return (
    <svg viewBox="0 0 290 118" className="h-[118px] w-[290px] self-end" aria-hidden="true">
      <path d="M8 118V86l6-18 6-30h6l4-14h4V6h8v18h4l4 14h6l4 30 8 18v32z" fill="#9c6478" />
      <path d="M26 38h28l10 34H14z" fill="#98386c" />
      <path d="M34 24h10v-8H34z" fill="#c4a898" />
      <path d="M12 92h54v26H12z" fill="#bc8484" />
      <ellipse cx="38" cy="78" rx="9" ry="10" fill="#e8c8b0" />
      <path d="M70 118q4-22 16-24v24z" fill="#1c3ca8" />
      <path d="M96 98q-2-34 24-42l4-14 4 14q26 10 20 42z" fill="#b04c64" />
      <path d="M148 98V44h24V30h8v8h8v-8h8v8h14V14l4-8 6 8v24h10v-8h8v8h8v-8h6v8h8v-8h8v8h22v60z" fill="#902860" />
      <path d="M156 66h134v26H156z" fill="#1c2cac" />
      <path d="M190 66q18-22 42 0z" fill="#c4588c" />
      <path d="M86 92h204v26H86z" fill="#a04478" />
      <path d="M96 98v20M112 98v20M128 98v20M144 98v20M160 98v20M176 98v20M192 98v20M208 98v20M224 98v20M240 98v20M256 98v20M272 98v20" stroke="#5c1c5c" strokeWidth="6" />
      <path d="M98 2l5 8 10 2-8 6 2 9-9-4-9 4 2-9-8-6 10-2z" fill="#8c60e0" />
      <path d="M162 14h12v10h-12z" fill="#c8a088" />
      <path d="M0 30h12v10H0z" fill="#3c9498" />
    </svg>
  );
}

function Taskbar() {
  return (
    <nav aria-label="Taskbar" className="flex h-[132px] items-stretch bg-linear-to-r from-[#000048] via-[#0c3498] via-45% to-[#00004c] text-[42px] text-[#d0dcff]">
      <button aria-label="Start" className="flex w-[170px] shrink-0 justify-center pt-8 pr-4">
        <svg viewBox="0 0 66 56" className="h-14 w-[66px]" fill="#dce6ff" aria-hidden="true"><path d="M0 5l28-3v24H0zM31 2l35-2v26H31zM0 29h28v24L0 50zM31 29h35v27l-35-3z" /></svg>
      </button>
      <div className="flex w-[1226px] shrink-0 items-center bg-[#9cb8f0]">
        <svg viewBox="0 0 64 54" className="mb-5 ml-11 h-[54px] w-16 shrink-0" fill="none" stroke="#141c60" strokeWidth="5" aria-hidden="true"><ellipse cx="42" cy="20" rx="18" ry="17" /><path d="M29 32L3 52" /></svg>
        <input aria-label="Search" placeholder="Type here to search" className="mb-4 ml-11 min-w-0 flex-1 bg-transparent text-[53px] placeholder:text-[#28387c]" />
        <CityArt />
      </div>
      <div className="flex flex-1 items-center pb-4">
        <button aria-label="Cortana" className="ml-[60px]">
          <svg viewBox="0 0 64 54" className="h-[54px] w-16" aria-hidden="true"><ellipse cx="32" cy="27" rx="27" ry="23" fill="none" stroke="#ccd8ff" strokeWidth="7" /></svg>
        </button>
        <button aria-label="Task View" className="ml-[122px]">
          <svg viewBox="0 0 66 52" className="h-[52px] w-[66px]" fill="none" stroke="#ccd8ff" strokeWidth="5" aria-hidden="true"><path d="M3 0v10h36V0M3 52V42h36v10M3 17h36v18H3zM58 0v14M58 28v24" /><path d="M58 15v10" strokeWidth="11" /></svg>
        </button>
        <button aria-label="File Explorer" className="relative ml-[122px]">
          <svg viewBox="0 0 86 60" className="h-[60px] w-[86px]" aria-hidden="true"><path d="M0 2h36l6 8h40v50H0z" fill="#d8b868" /><path d="M0 2h36l6 8H0z" fill="#c88c60" /><path d="M16 60V34h54v26H56V48H30v12z" fill="#2c80e0" /></svg>
          <span className="absolute -bottom-10 -left-9 h-[6px] w-[156px] bg-[#5c9cf0]" />
        </button>
        <button aria-label="Excel" className="relative ml-[100px]">
          <svg viewBox="0 0 90 72" className="h-[72px] w-[90px]" aria-hidden="true">
            <path d="M2 14L14 2h66v16h10v54L2 60z" fill="#c8e0e8" stroke="#5c9c90" strokeWidth="2" />
            <path d="M22 18l32 28M54 18L22 46" stroke="#0c4030" strokeWidth="11" />
            <path d="M64 22h16v9H64zM64 36h16v9H64zM18 50h12v7H18zM38 50h14v9H38zM62 50h16v11H62z" fill="#2c7460" />
          </svg>
          <span className="absolute -bottom-[34px] -left-12 h-[6px] w-[188px] bg-[#5c9cf0]" />
        </button>
        <div className="ml-auto flex items-center">
          <svg viewBox="0 0 88 66" className="mr-8 h-[66px] w-[88px]" aria-hidden="true"><path d="M18 46Q0 44 2 30q2-12 18-12Q26 2 42 2q18 0 24 16 20 2 20 16 0 12-16 12z" fill="#c0d4fc" /><path d="M48 32q18 12 18 24 0 8-8 8-10 0-10-14z" fill="#3c98ec" /></svg>
          <span className="text-[49px]">31°C</span>
          <span className="ml-8 text-[49px]">Light rain</span>
          <button aria-label="Hidden icons" className="ml-16"><svg viewBox="0 0 50 30" className="h-[30px] w-[50px]" fill="none" stroke="#ccd8ff" strokeWidth="6" aria-hidden="true"><path d="M3 28L25 4l22 24" /></svg></button>
          <div className="flex items-center pb-3">
            <svg viewBox="0 0 68 48" className="ml-8 h-12 w-[68px]" fill="none" stroke="#ccd8ff" strokeWidth="5" aria-hidden="true"><path d="M14 20V3h50v32H14V24M38 35v9M24 45h28" /><path d="M3 5h16v12H3zM10 17v26" strokeWidth="4" /></svg>
            <svg viewBox="0 0 46 52" className="ml-9 h-[52px] w-[46px]" fill="none" stroke="#ccd8ff" strokeWidth="5" aria-hidden="true"><rect x="4" y="14" width="36" height="24" rx="8" /><circle cx="22" cy="26" r="6" /><path d="M12 6q10-6 20 0M12 46q10 6 20 0" /></svg>
            <svg viewBox="0 0 68 46" className="ml-9 h-[46px] w-[68px]" fill="none" stroke="#ccd8ff" strokeWidth="4" aria-hidden="true"><path d="M3 16h10L25 4v38L13 30H3zM34 16q5 7 0 14M44 10q9 13 0 26M54 4q14 19 0 38" /></svg>
            <span className="ml-8 text-[43px]">ENG</span>
          </div>
          <div className="mb-6 ml-[62px] text-center text-[42px] leading-[56px]">
            <div>4:15 PM</div>
            <div>8/5/2022</div>
          </div>
          <button aria-label="Notifications" className="relative mr-[104px] mb-6 ml-[78px]">
            <svg viewBox="0 0 70 56" className="h-14 w-[70px]" aria-hidden="true"><path d="M0 0h66v42H42L30 54V42H0z" fill="#d0dcff" /><path d="M14 13h40M14 22h40M14 31h26" stroke="#08105c" strokeWidth="4" /></svg>
            <span className="absolute -right-1 -bottom-6 text-[46px] leading-none font-semibold">1</span>
          </button>
        </div>
      </div>
    </nav>
  );
}

export default function App() {
  return (
    <div className="min-h-screen bg-black pt-2 font-['Noto_Sans',sans-serif]">
      <div className="relative overflow-hidden [clip-path:polygon(22px_0,100%_0,100%_70%,calc(100%-14px)_100%,0_100%,0_55%)]">
        <TitleBar />
        <TabStrip />
        <Ribbon />
        <FormulaBar />
        <div className="h-[10px] bg-[#a0ccfc]" />
        <Grid />
        <div className="h-2 bg-[#b0d4fe]" />
        <SheetTabs />
        <StatusBar />
        <Taskbar />
        <div className="pointer-events-none absolute inset-0 z-30 bg-[radial-gradient(ellipse_64%_66%_at_52%_58%,rgba(0,40,110,0)_45%,rgba(0,36,110,0.2)_78%,rgba(0,20,90,0.5)_115%)]" />
      </div>
    </div>
  );
}
